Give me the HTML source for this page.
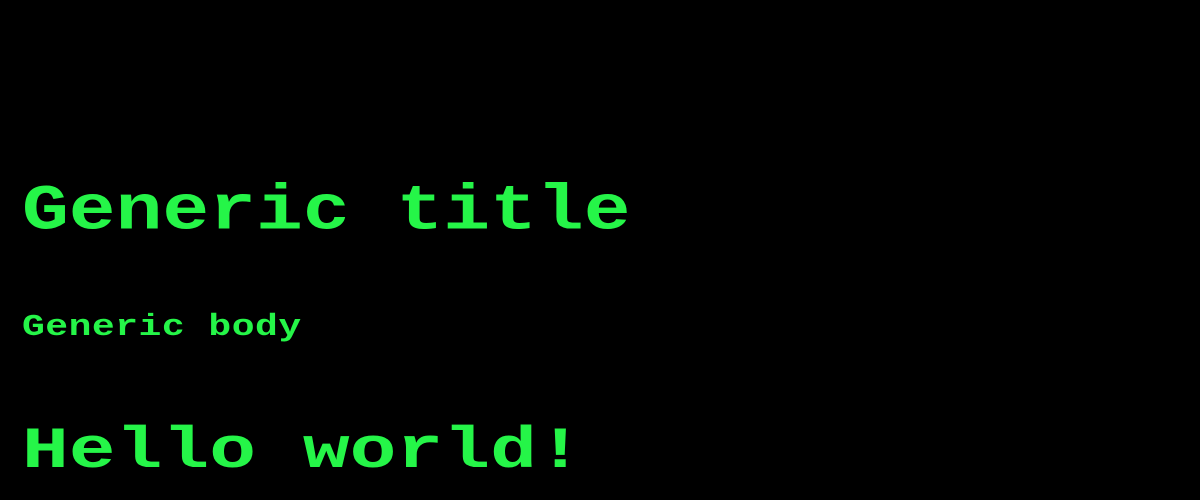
<!DOCTYPE html>
<html><head><style>
html,body{margin:0;padding:0;background:#000;width:1200px;height:500px;overflow:hidden}
div{position:absolute;left:22px;color:#25f548;font-family:"Liberation Mono",monospace;font-weight:bold;line-height:1;white-space:pre}
.t{font-size:78px;top:168px;transform:scaleY(0.82);transform-origin:0 66px}
.b{font-size:38px;top:306px;letter-spacing:0.5px;transform:scaleY(0.8);transform-origin:0 32px}
.h{font-size:78px;top:406px;transform:scaleY(0.75);transform-origin:0 66px}
</style></head><body>
<div class="t">Generic title</div>
<div class="b">Generic body</div>
<div class="h">Hello world!</div>
</body></html>
